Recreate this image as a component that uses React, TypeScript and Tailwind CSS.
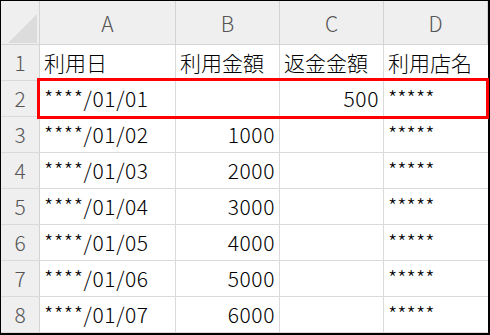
const cols = ["A", "B", "C", "D"];

const rows = [
  { a: "利用日", b: "利用金額", c: "返金金額", d: "利用店名", head: true },
  { a: "****/01/01", b: "", c: "500", d: "*****" },
  { a: "****/01/02", b: "1000", c: "", d: "*****" },
  { a: "****/01/03", b: "2000", c: "", d: "*****" },
  { a: "****/01/04", b: "3000", c: "", d: "*****" },
  { a: "****/01/05", b: "4000", c: "", d: "*****" },
  { a: "****/01/06", b: "5000", c: "", d: "*****" },
  { a: "****/01/07", b: "6000", c: "", d: "*****" },
];

const font = { fontFamily: '"Noto Sans CJK JP", "Noto Sans", sans-serif' };

export default function App() {
  return (
    <div className="w-[490px] h-[335px] bg-white">
      <div
        className="relative w-[490px] h-[335px] border-l border-t border-r-2 border-b-2 border-black text-[21px] leading-none font-light text-black"
        style={font}
      >
        {/* column header */}
        <div className="grid grid-cols-[39px_136px_104px_104px_104px] h-[44px] bg-[#efefef] border-b border-[#d4d4d4]">
          <div className="relative border-r border-[#d4d4d4]">
            <svg className="absolute left-[7px] top-[13px]" width="29" height="29" viewBox="0 0 29 29">
              <polygon points="0,29 29,0 29,29" fill="#dcdcdc" />
            </svg>
          </div>
          {cols.map((c) => (
            <div key={c} className="flex items-center justify-center border-r border-[#d4d4d4] text-[#555] pt-[1px]">
              {c}
            </div>
          ))}
        </div>

        {rows.map((r, i) => (
          <div key={i} className="grid grid-cols-[39px_136px_104px_104px_104px] h-[36px] border-b border-[#dadada]">
            <div className="flex items-center justify-center bg-[#efefef] border-r border-[#d4d4d4] text-[#555]">
              {i + 1}
            </div>
            <div className={`flex items-center px-[4px] border-r border-[#dadada] whitespace-nowrap ${r.head ? "" : "tracking-[0.6px]"}`}>
              {r.a}
            </div>
            <div className={`flex items-center px-[4px] border-r border-[#dadada] whitespace-nowrap ${r.head ? "justify-start" : "justify-end tracking-[0.6px]"}`}>
              {r.b}
            </div>
            <div className={`flex items-center px-[4px] border-r border-[#dadada] whitespace-nowrap ${r.head ? "justify-start" : "justify-end tracking-[0.6px]"}`}>
              {r.c}
            </div>
            <div className="flex items-center px-[4px] whitespace-nowrap">{r.d}</div>
          </div>
        ))}

        {/* highlight on row 2 */}
        <div className="absolute left-[36px] top-[77px] w-[452px] h-[41px] border-[3px] border-[#ff0000]" />
      </div>
    </div>
  );
}
